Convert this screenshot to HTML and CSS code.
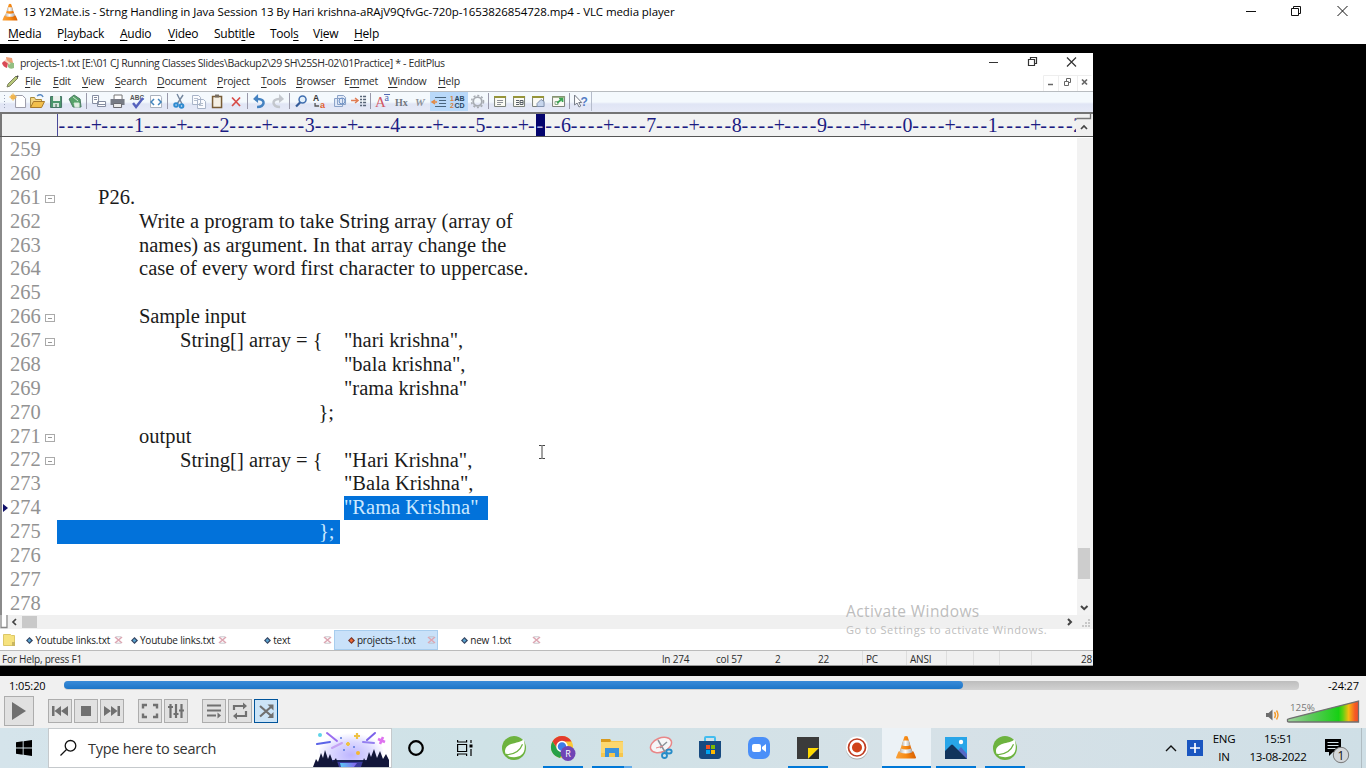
FILE: index.html
```html
<!DOCTYPE html>
<html lang="en">
<head>
<meta charset="utf-8">
<title>VLC media player</title>
<link rel="stylesheet" href="styles.css">
</head>
<body>
<svg class="defs" width="0" height="0">
  <defs>
    <linearGradient id="og" x1="0" x2="1"><stop offset="0" stop-color="#f9a13a"/><stop offset=".5" stop-color="#f78b14"/><stop offset="1" stop-color="#d95f00"/></linearGradient>
    <linearGradient id="wg" x1="0" x2="1"><stop offset="0" stop-color="#b9b9b9"/><stop offset=".45" stop-color="#fff"/><stop offset="1" stop-color="#a9a9a9"/></linearGradient>
    <symbol id="cone" viewBox="0 0 24 24">
      <path d="M4.5 16.5h15l2.500 6q0 .9-.9.9H2.900q-.9 0-.9-.9z" fill="url(#og)"/>
      <path d="M10.400 1.500q1.600-.8 3.200 0L18.800 18q-1 2-6.800 2t-6.800-2z" fill="url(#og)"/>
      <path d="M9.200 5.600h5.600l1.400 4.600q-4.200 1.800-8.400 0z" fill="url(#wg)"/>
      <path d="M6.800 13.400q5 2 10.400 0l1.200 3.800q-6.400 2.400-12.800 0z" fill="url(#wg)"/>
    </symbol>
    <symbol id="leaf" viewBox="0 0 24 24">
      <circle cx="12" cy="12" r="12" fill="#6db33f"/>
      <path d="M21.400 3.200C18.500 8 4 5.600 3 14.600c-.2 2.400 1 4.500 2.600 5.500 8 2.600 18.600 1 17-11.500-.2-2.200-.6-3.900-1.200-5.400z" fill="#fff"/>
      <path d="M4.600 18.800C12 18.300 18 14.800 20.500 8.200" fill="none" stroke="#6db33f" stroke-width="1.200"/>
      <circle cx="4.500" cy="19" r="1.200" fill="#6db33f"/>
    </symbol>
    <symbol id="tabx" viewBox="0 0 9 8"><path d="M1 1l7 6M8 1L1 7" stroke="#dda6b2" stroke-width="1.600"/><path d="M2 .8h5M2 7.200h5" stroke="#b9b9c0" stroke-width=".8"/></symbol>
    <symbol id="dia" viewBox="0 0 7 7"><path d="M3.500 0L7 3.500 3.500 7 0 3.500z" fill="#32415f"/><path d="M3.300 1.400l2 2-2 2-1.700-2z" fill="#5aa3cf"/></symbol>
    <symbol id="diar" viewBox="0 0 7 7"><path d="M3.500 0L7 3.500 3.500 7 0 3.500z" fill="#7a3225"/><path d="M3.300 1.400l2 2-2 2-1.700-2z" fill="#ee6b35"/></symbol>
  </defs>
</svg>

<header class="titlebar">
  <svg class="logo" width="16" height="18" viewBox="0 0 16 18" preserveAspectRatio="none"><use href="#cone" x="-1" y="0" width="18" height="18"/></svg>
  <span class="title">13 Y2Mate.is - Strng Handling in Java Session 13 By Hari krishna-aRAjV9QfvGc-720p-1653826854728.mp4 - VLC media player</span>
  <svg class="winbtns" width="116" height="24" fill="none" stroke="#111"><path d="M9 11.500h10M54.500 8.500h7v7h-7zM56.500 8V6.500h7v7H62M100.500 6l10 10M110.500 6l-10 10"/></svg>
</header>
<nav class="menu"><span><u>M</u>edia</span><span>P<u>l</u>ayback</span><span><u>A</u>udio</span><span><u>V</u>ideo</span><span>Subti<u>t</u>le</span><span>Tool<u>s</u></span><span>V<u>i</u>ew</span><span><u>H</u>elp</span></nav>

<main class="video">
  <section class="ep">
    <div class="ep-title">
      <svg class="ep-logo" width="14" height="14" viewBox="0 0 14 14"><path d="M4 1l6 1 1 5-6 1z" fill="#ee9f76"/><path d="M0 7q3-4 6 0l-1 5q-4-1-5-5z" fill="#d94a55"/><path d="M6 6l6 1v5q-4 2-6-1z" fill="#93bf83"/><path d="M3 4l5 4" stroke="#f6d4bd" stroke-width="2"/></svg>
      <span>projects-1.txt [E:\01 CJ Running Classes Slides\Backup2\29 SH\25SH-02\01Practice] * - EditPlus</span>
      <svg class="ep-btns" width="104" height="19" fill="none" stroke="#333"><path d="M0 9.500h9M39.500 6.500h6v6h-6zM41.500 6V4.500h6v6H46" stroke-width="1.200"/><path d="M78 4.500l9 9M87 4.500l-9 9" stroke-width="1.200"/></svg>
    </div>
    <div class="ep-menu">
      <svg width="16" height="16" viewBox="0 0 16 16"><path d="M3 11L11 3l2 2-8 8-3 1z" fill="#b7c77a" stroke="#7f8360"/><path d="M12 3l1 1" stroke="#444" stroke-width="2"/></svg>
      <span><u>F</u>ile</span><span><u>E</u>dit</span><span><u>V</u>iew</span><span><u>S</u>earch</span><span><u>D</u>ocument</span><span><u>P</u>roject</span><span><u>T</u>ools</span><span><u>B</u>rowser</span><span>E<u>m</u>met</span><span><u>W</u>indow</span><span><u>H</u>elp</span>
      <svg class="mdi" width="50" height="18" fill="none" stroke="#666"><path d="M.5 18V2.500h48M15.500 2.500V18M34.500 2.500V18" stroke="#eee"/><path d="M5 11.500h5" stroke-width="1.500"/><path d="M21.500 8.500h4v4h-4zM23.500 8V5.500h4v4H26"/><path d="M39 6.500l5 5M44 6.500l-5 5" stroke-width="1.700"/></svg>
    </div>
    <div class="toolbar">
      <svg class="grip" viewBox="0 0 9 19"><path d="M4.500 3v14" stroke="#9aa3b8" stroke-dasharray="1 2"/></svg>
      <svg class="tb" viewBox="0 0 19 19"><path d="M6.500 3.500h7l3 3v9h-10z" fill="#fff" stroke="#9b9ba8"/><path d="M4 1.500v7M.5 5h7M2 3l4 4M6 3L2 7" stroke="#f0b44c" stroke-width="1.300"/></svg>
      <svg class="tb" viewBox="0 0 19 19"><path d="M2.500 15.500v-10h4l1 2h6v3" fill="#f5d782" stroke="#a88b3d"/><path d="M2.500 15.500l3-6h11l-3 6z" fill="#f2bf4c" stroke="#a8792c"/><path d="M9 4q4-3 6 1" stroke="#598ac3" fill="none" stroke-width="1.500"/></svg>
      <svg class="tb" viewBox="0 0 19 19"><path d="M3.500 4.500h11v11h-11z" fill="#4b956d" stroke="#477466"/><path d="M6 4h7v5H6z" fill="#edf1ee"/><path d="M6 11h6v4H6z" fill="#d5e3dc"/><path d="M9 12v3" stroke="#354"/></svg>
      <svg class="tb" viewBox="0 0 19 19"><path d="M3 7l5-4 6 4 1 8H7z" fill="#56a36a" stroke="#4b7c63"/><path d="M7 5l5 4M8 11h5v4H9z" stroke="#d3e9d7" fill="#e4eee6"/></svg>
      <i class="sep"></i>
      <svg class="tb" viewBox="0 0 19 19"><path d="M3.500 3.500h6v8h-6zM8.500 9.500h8v5h-8z" fill="#fff" stroke="#848ca0"/><path d="M5 5.500h3M5 7.500h3M9 12.500h7" stroke="#848ca0"/></svg>
      <svg class="tb" viewBox="0 0 19 19"><path d="M6 7V3h8v4" fill="#fff" stroke="#777"/><path d="M2.500 7h14v6h-14z" fill="#777b85"/><path d="M5.500 11.500h8v4h-8z" fill="#ececec" stroke="#6a6a70"/></svg>
      <svg class="tb" viewBox="0 0 19 19"><text x="2" y="7.500" font-size="6.500" font-weight="700" fill="#555" font-family="Liberation Sans">ABC</text><path d="M5 11l3 4 7-9" fill="none" stroke="#5561bd" stroke-width="2.400"/></svg>
      <svg class="tb" viewBox="0 0 19 19"><path d="M3.500 3.500h10l1 2v10h-11z" fill="#fff" stroke="#a9b1bd"/><path d="M7 7l-3 3 3 3M11 7l3 3-3 3" stroke="#4385bd" fill="none" stroke-width="1.500"/></svg>
      <i class="sep"></i>
      <svg class="tb" viewBox="0 0 19 19"><path d="M7 2l5 10M13 3L7 12" stroke="#74879e" stroke-width="1.400"/><g fill="none" stroke="#2e8bd0" stroke-width="2"><circle cx="6" cy="13" r="1.800"/><circle cx="11.500" cy="14" r="1.800"/></g></svg>
      <svg class="tb" viewBox="0 0 19 19"><path d="M3.500 3.500h6l2 2v7h-8zM8.500 7.500h6l2 2v7h-8z" fill="#fbfcff" stroke="#a7b3c7"/><path d="M5 6.500h4M5 8.500h3M10 11.500h4M10 13.500h4" stroke="#b5bfcd"/></svg>
      <svg class="tb" viewBox="0 0 19 19"><path d="M4.500 4.500h9v11h-9z" fill="#f5f0e4" stroke="#785c36" stroke-width="1.500"/><path d="M7 2.500h4v3H7z" fill="#776e62"/></svg>
      <svg class="tb" viewBox="0 0 19 19"><path d="M5 5.500l8 8.500M13 5.500L5 14" stroke="#d74c48" stroke-width="1.700"/></svg>
      <i class="sep"></i>
      <svg class="tb" viewBox="0 0 19 19"><path d="M7 15c8 0 9-8 1-8H5" fill="none" stroke="#4482c1" stroke-width="2.500"/><path d="M8 2L3 7l5 4z" fill="#4482c1"/></svg>
      <svg class="tb" viewBox="0 0 19 19"><path d="M11 15c-8 0-9-8-1-8h3" fill="none" stroke="#c3c7cd" stroke-width="2.500"/><path d="M10 2l5 5-5 4z" fill="#c3c7cd"/></svg>
      <i class="sep"></i>
      <svg class="tb" viewBox="0 0 19 19"><circle cx="10.500" cy="7.500" r="3.500" fill="#e3f0fb" stroke="#3f6eb0" stroke-width="1.500"/><path d="M8 10.500L4 14.500" stroke="#345b98" stroke-width="2.300"/></svg>
      <svg class="tb" viewBox="0 0 19 19"><text x="2" y="9" font-size="8.500" font-weight="700" fill="#333" font-family="Liberation Sans">A</text><text x="9" y="15.500" font-size="9" font-weight="700" fill="#e2602f" font-family="Liberation Sans">a</text><path d="M4 11v3h4" stroke="#555" fill="none" stroke-width="1.300"/></svg>
      <svg class="tb" viewBox="0 0 19 19"><path d="M3.500 6.500h8v8h-8zM6.500 3.500h6l2 2v7h-8z" fill="#e3ebf8" stroke="#89a1c7"/><circle cx="11" cy="9" r="3" fill="none" stroke="#6d92c6"/></svg>
      <svg class="tb" viewBox="0 0 19 19"><path d="M1 8.500h6M5 6l3 2.500L5 11" stroke="#e07c54" fill="none" stroke-width="1.500"/><path d="M10 4.500h6M10 7.500h6M10 10.500h6M10 13.500h6" stroke="#586577" stroke-width="1.400" stroke-dasharray="2 1 4"/></svg>
      <i class="sep"></i>
      <svg class="tb" viewBox="0 0 19 19"><text x="2" y="15" font-size="15" fill="#d25765" font-family="Liberation Serif">A</text><text x="11.500" y="9" font-size="10" fill="#5369b2" font-family="Liberation Serif">a</text><path d="M11 2.500h6" stroke="#5369b2"/></svg>
      <svg class="tb" viewBox="0 0 19 19"><text x="3" y="13.500" font-size="10" font-weight="700" fill="#72777e" font-family="Liberation Serif">Hx</text></svg>
      <svg class="tb" viewBox="0 0 19 19"><text x="4" y="13.500" font-size="11" font-style="italic" font-weight="700" fill="#8e939b" font-family="Liberation Serif">W</text></svg>
      <svg class="tb on" viewBox="0 0 19 19"><path d="M5 5.500h11M9 8.500h7M9 11.500h7M5 14.500h11" stroke="#48657d" stroke-width="1.200"/><path d="M2 10h5M5 8l-3 2 3 2" stroke="#e28a44" fill="none" stroke-width="1.500"/></svg>
      <svg class="tb on" viewBox="0 0 19 19"><g font-size="7" font-weight="700" font-family="Liberation Sans"><text x="1" y="9" fill="#d7823d">1</text><text x="5.500" y="9" fill="#294762">AB</text><text x="1" y="16" fill="#d7823d">2</text><text x="5.500" y="16" fill="#294762">CD</text></g></svg>
      <svg class="tb" viewBox="0 0 19 19"><circle cx="9.500" cy="9.500" r="4.300" fill="none" stroke="#a7abb1" stroke-width="1.800"/><circle cx="9.500" cy="9.500" r="6" fill="none" stroke="#a7abb1" stroke-width="1.500" stroke-dasharray="2 1.900"/></svg>
      <i class="sep"></i>
      <svg class="tb" viewBox="0 0 19 19"><path d="M3.500 4.500h11v10h-11z" fill="#fbfbf4" stroke="#7a8078"/><path d="M3 5h12" stroke="#96953a" stroke-width="2"/><path d="M6 8.500h6M6 10.500h6M6 12.500h4" stroke="#8c9097"/></svg>
      <svg class="tb" viewBox="0 0 19 19"><path d="M3.500 4.500h11v10h-11z" fill="#fbfbf4" stroke="#7a8078"/><path d="M3 5h12" stroke="#96953a" stroke-width="2"/><path d="M6 8.500h3M6 10.500h3M6 12.500h3M10 8.500h3v4h-3zM10 10.500h3" stroke="#555d66" fill="none"/></svg>
      <svg class="tb" viewBox="0 0 19 19"><path d="M3.500 4.500h11v10h-11z" fill="#fbfbf4" stroke="#7a8078"/><path d="M3 5h12" stroke="#96953a" stroke-width="2"/><path d="M8 11.500l4-4 3 2v5H8z" fill="#c7d6ed" stroke="#8192ae"/></svg>
      <svg class="tb" viewBox="0 0 19 19"><path d="M3.500 4.500h12v10h-12z" fill="#fbfbf4" stroke="#7a8078"/><path d="M3 5h13" stroke="#8b9b72" stroke-width="1.500"/><path d="M6 9.500h3v3H6z" fill="none" stroke="#8ba98b"/><path d="M8 11l5-4M10 6.500h3.500V10" stroke="#3aa653" fill="none" stroke-width="1.700"/></svg>
      <i class="sep"></i>
      <svg class="tb" viewBox="0 0 19 19"><path d="M2.500 3v10l2.500-2 2 4 1.700-1-2-3.500h3z" fill="#fff" stroke="#757b87"/><text x="8.500" y="13.500" font-size="12" font-weight="700" fill="#557ec6" font-family="Liberation Sans">?</text></svg>
      <i class="tb-end"></i>
    </div>
    <div class="ruler">
      <div class="margin"></div>
      <div class="ticks"><b>----</b><i>+</i><b>----</b><i>1</i><b>----</b><i>+</i><b>----</b><i>2</i><b>----</b><i>+</i><b>----</b><i>3</i><b>----</b><i>+</i><b>----</b><i>4</i><b>----</b><i>+</i><b>----</b><i>5</i><b>----</b><i>+</i><b class="one">-</b><b class="one cur">-</b><b class="two">--</b><i>6</i><b>----</b><i>+</i><b>----</b><i>7</i><b>----</b><i>+</i><b>----</b><i>8</i><b>----</b><i>+</i><b>----</b><i>9</i><b>----</b><i>+</i><b>----</b><i>0</i><b>----</b><i>+</i><b>----</b><i>1</i><b>----</b><i>+</i><b>----</b><i>2</i></div>
      <svg class="split" width="17" height="25" viewBox="0 0 17 25" fill="none"><path d="M0 0h17v25H0z" fill="#f0f0f0"/><path d="M0 7.500l1-1h13.500V1H0" stroke="#777" stroke-width="1.300"/><path d="M5 17l3-3 3 3" stroke="#444" stroke-width="1.700"/></svg>
    </div>
    <div class="edit">
<div class="nums"><span>259</span><span>260</span><span class="f">261</span><span>262</span><span>263</span><span>264</span><span>265</span><span class="f">266</span><span class="f">267</span><span>268</span><span>269</span><span>270</span><span class="f">271</span><span class="f">272</span><span>273</span><span class="here">274</span><span>275</span><span>276</span><span>277</span><span>278</span></div>
<pre class="code">


	P26.
		Write a program to take String array (array of
		names) as argument. In that array change the
		<span class="wide">case of every word first character to uppercase.</span>

		<span class="tight">Sample input</span>
			String[] array = {	"hari krishna",
							"bala krishna",
							"rama krishna"
						   };
		output
			String[] array = {	"Hari Krishna",
							"Bala Krishna",
							<span class="sel a">"Rama Krishna"</span>
<span class="sel b">};</span>
</pre>
      <svg class="ibeam" width="8" height="14" fill="none" stroke="#444"><path d="M1 .5h2.500l.5.500.5-.5H7M4 1v12M1 13.500h2.500l.5-.5.5.500H7"/></svg>
      <div class="vscroll"><i></i><svg width="16" height="14" viewBox="0 0 16 14"><path d="M4 5l3.200 3.200L10.500 5" fill="none" stroke="#444" stroke-width="2"/></svg></div>
    </div>
    <div class="hscroll">
      <svg width="22" height="14" viewBox="0 0 22 14" fill="none"><path d="M0 0h8v13H0z" fill="#fff"/><path d="M1 0v12.500h6V0" stroke="#888" stroke-width="1.300"/><path d="M16 4l-3 3 3 3" stroke="#444" stroke-width="1.700"/></svg><i></i>
      <svg class="hr" width="28" height="14" viewBox="0 0 28 14" fill="none"><path d="M3 4l3 3-3 3" stroke="#444" stroke-width="2"/><path d="M17 11h2M20 11h2M23 11h2M20 8h2M23 8h2M23 5h2" stroke="#bbb" stroke-width="1.500"/></svg>
    </div>
    <div class="tabs">
      <svg class="fold" width="20" height="20" viewBox="0 0 20 20"><path d="M3.500 4.500h7l1 1h3v10h-11z" fill="#f6e27e" stroke="#dcc767"/><path d="M12 12h3v4h-3z" fill="#c9b661"/></svg>
      <div class="tab"><span><svg width="7" height="7"><use href="#dia"/></svg>Youtube links.txt</span><svg width="9" height="8"><use href="#tabx"/></svg></div>
      <div class="tab"><span><svg width="7" height="7"><use href="#dia"/></svg>Youtube links.txt</span><svg width="9" height="8"><use href="#tabx"/></svg></div>
      <div class="tab"><span><svg width="7" height="7"><use href="#dia"/></svg>text</span><svg width="9" height="8"><use href="#tabx"/></svg></div>
      <div class="tab act"><span><svg width="7" height="7"><use href="#diar"/></svg>projects-1.txt</span><svg width="9" height="8"><use href="#tabx"/></svg></div>
      <div class="tab"><span><svg width="7" height="7"><use href="#dia"/></svg>new 1.txt</span><svg width="9" height="8"><use href="#tabx"/></svg></div>
    </div>
    <div class="status"><span>For Help, press F1</span><span>ln 274</span><span>col 57</span><span>2</span><span>22</span><span class="l">PC</span><span class="l">ANSI</span><span class="l"></span><span class="l"></span><span class="l"></span><span class="l last">28</span></div>
    <div class="wm"><p class="wm1">Activate Windows</p><p class="wm2">Go to Settings to activate Windows.</p></div>
  </section>
</main>

<section class="controls">
  <div class="seek"><span class="t1">1:05:20</span><div class="bar"><i></i></div><span class="t2">-24:27</span></div>
  <div class="btns">
    <button class="play"><svg width="28" height="28"><path d="M7 5l14 9-14 9z"/></svg></button>
    <div class="g"><button><svg width="22" height="22"><path d="M3 6h2.500v10H3zM12 6v10l-6.500-5zM19 6v10l-7-5z"/></svg></button><button><svg width="22" height="22"><path d="M6 6h10v10H6z"/></svg></button><button><svg width="22" height="22"><path d="M16.500 6H19v10h-2.500zM10 6v10l6.500-5zM3 6v10l7-5z"/></svg></button></div>
    <div class="g"><button><svg width="22" height="22"><path d="M4 8.500V5h4M14 5h4v3.500M4 13.500V17h4M14 17h4v-3.500" fill="none" stroke="#707070" stroke-width="2.400"/></svg></button><button><svg width="22" height="22"><path d="M5.500 4v14M11 4v14M16.500 4v14M3 7h5M8.500 14h5M14 10.500h5" fill="none" stroke="#707070" stroke-width="2.200"/></svg></button></div>
    <div class="g"><button><svg width="22" height="22"><path d="M4 5.500h14M4 10.500h14M4 15.500h9" stroke="#707070" stroke-width="2.200"/><path d="M14.500 12.500L18 15.500l-3.500 3z"/></svg></button><button><svg width="22" height="22"><path d="M5 10V6h10M17 11v5H7" fill="none" stroke="#707070" stroke-width="2.200"/><path d="M14 2.500L18 6l-4 3.500zM8 12.500L4 16l4 3.500z"/></svg></button><button class="on"><svg width="22" height="22"><path d="M5 6l12 10.500M5 16.500L17 6" fill="none" stroke="#707070" stroke-width="2.200"/><path d="M12.500 4.500h6v6zM12.500 18h6v-6z"/></svg></button></div>
    <svg class="vol" width="96" height="28" viewBox="0 0 96 28">
      <defs><linearGradient id="vg" x1="0" x2="1"><stop offset="0" stop-color="#a3d3a1"/><stop offset=".3" stop-color="#63c862"/><stop offset=".72" stop-color="#17d014"/><stop offset=".78" stop-color="#5fd012"/><stop offset=".86" stop-color="#f6bb12"/><stop offset=".95" stop-color="#f55b24"/><stop offset="1" stop-color="#f34a28"/></linearGradient></defs>
      <path d="M2 19v-4h2.500l4-3.500v11l-4-3.500z" fill="#6d6d6d"/><path d="M10.500 14q2 3 0 6M12.500 12.500q3 4.500 0 9" fill="none" stroke="#f39b2c" stroke-width="1.400"/>
      <path d="M23.500 23.500v-2q0 0 2-1L94.500 3v21H25q-1.500 0-1.500-.5z" fill="url(#vg)" stroke="#707070" stroke-width="1.300"/>
      <text x="26" y="12.500" font-size="9.500" fill="#777" font-family="Open Sans" textLength="25" lengthAdjust="spacingAndGlyphs">125%</text>
    </svg>
  </div>
</section>

<footer class="taskbar">
  <div class="start"><svg width="16" height="16"><path d="M0 2.300l6.700-1v6.300H0zM7.600 1.200L16 0v7.600H7.600zM0 8.500h6.700v6.300L0 13.800zM7.600 8.500H16V16l-8.400-1.200z"/></svg></div>
  <div class="search">
    <svg class="mag" width="18" height="18" fill="none" stroke="#111" stroke-width="1.300"><circle cx="10.500" cy="6.800" r="5.300"/><path d="M6.500 10.500L.5 16.500"/></svg>
    <span>Type here to search</span>
    <svg class="art" width="78" height="38" viewBox="0 0 78 38">
      <defs><radialGradient id="rg" cx=".5" cy=".6" r=".55"><stop offset="0" stop-color="#bdb5ff"/><stop offset=".6" stop-color="#dcd9ff"/><stop offset="1" stop-color="#fff"/></radialGradient><linearGradient id="lk" x1="0" x2="1"><stop offset="0" stop-color="#59c8f5"/><stop offset="1" stop-color="#8561ea"/></linearGradient></defs>
      <ellipse cx="38" cy="22" rx="32" ry="20" fill="url(#rg)"/>
      <g stroke-linecap="round" stroke-width="2"><path d="M14 4l10 8" stroke="#9a6df0"/><path d="M4 15l13-2" stroke="#5a63e8"/><path d="M62 4l-8 7" stroke="#7b62ea"/><path d="M61 14l-11-1" stroke="#9480f0"/><path d="M19 19l10-5" stroke="#c5a3f4"/></g>
      <path d="M44 4v6M41 7h6M35 13v4M33 15h4" stroke="#efc244" stroke-width="2.200"/><path d="M65 10l7 3M70 8l-3 7" stroke="#de73ef" stroke-width="2.600"/><circle cx="7" cy="6" r="2" fill="#5dd4e9"/><circle cx="45" cy="24" r="2" fill="#f4b631"/><circle cx="28" cy="9" r="1" fill="#5877dd"/><circle cx="31" cy="21" r="1" fill="#5877dd"/><circle cx="41" cy="18" r="1" fill="#5877dd"/>
      <path d="M18 31h40v7H18z" fill="#3b3b9d"/><path d="M27 34h17l-3 4H28z" fill="url(#lk)"/><path d="M20 31h34v2H20z" fill="#1b2458"/>
      <path d="M0 38l3-8 2 3 3-9 2 5 2-8 3 9 2-5 3 8 3-4 3 9zM48 38l3-9 2 4 3-10 2 5 3-8 3 9 3-7 3 8 3-5 3 6v7z" fill="#12163a"/>
    </svg>
  </div>
  <div class="apps">
    <div class="app"><svg width="18" height="18"><circle cx="9" cy="9" r="6.800" fill="none" stroke="#000" stroke-width="2.200"/></svg></div>
    <div class="app"><svg width="18" height="18" fill="none" stroke="#000" stroke-width="1.200"><path d="M1.600 5.500h9v7h-9zM1.600 1v2h9V1M1.600 17v-2h9v2M15 1v3M15 10v7"/><path d="M13.500 5.500h3v3h-3z" fill="#000" stroke="none"/></svg></div>
    <div class="app"><svg width="24" height="24"><use href="#leaf"/></svg></div>
    <div class="app run"><svg width="26" height="26" viewBox="0 0 26 26"><circle cx="12" cy="12" r="11" fill="#fcc934"/><path d="M12 1a11 11 0 0 1 9.500 5.500H12l-4 8L2.500 6.500A11 11 0 0 1 12 1z" fill="#e33b2e"/><path d="M2.500 6.500L8 15l5 2-3 6A11 11 0 0 1 2.500 6.500z" fill="#27a148"/><circle cx="12" cy="11.500" r="5" fill="#3d7de8" stroke="#fff" stroke-width="1.500"/><circle cx="18" cy="18.500" r="7.500" fill="#7045b5"/><text x="18" y="22" text-anchor="middle" font-size="9" fill="#fff" font-family="Open Sans">R</text></svg></div>
    <div class="app run more"><svg width="22" height="20" viewBox="0 0 22 20"><path d="M0 1h9l1.500 2H22v16H0z" fill="#f6c64d"/><path d="M0 1h9l1 2-1 1H0z" fill="#d99a1c"/><path d="M0 4h22v11H0z" fill="#fbd76f"/><path d="M4 10h14v9h-4v-4H8v4H4z" fill="#3b92dc"/></svg></div>
    <div class="app"><svg width="24" height="24" viewBox="0 0 24 24" fill="none"><ellipse cx="12" cy="9" rx="11" ry="7" transform="rotate(-22 12 9)" fill="#f5f6f7" stroke="#e98788" stroke-width="1.500"/><path d="M9 4l7 12M18 6l-7 6" stroke="#8b9198" stroke-width="1.500"/><path d="M7 12l7-2" stroke="#e88"/><g stroke="#278cc8" stroke-width="1.800"><circle cx="15.500" cy="19.500" r="2.500"/><ellipse cx="20" cy="15.500" rx="2.700" ry="2"/></g></svg></div>
    <div class="app"><svg width="24" height="24" viewBox="0 0 24 24"><path d="M7 6V2q0-1 1-1h8q1 0 1 1v4" fill="none" stroke="#43bdef" stroke-width="2"/><path d="M1 5h22v15q0 3-3 3H4q-3 0-3-3z" fill="#174a80"/><path d="M8 9h4v4H8z" fill="#f25022"/><path d="M13 9h4v4h-4z" fill="#7fba00"/><path d="M8 14h4v4H8z" fill="#00a4ef"/><path d="M13 14h4v4h-4z" fill="#ffb900"/></svg></div>
    <div class="app"><svg width="24" height="24"><rect x="1" y="1" width="22" height="22" rx="7" fill="#4a8ff8"/><rect x="5" y="8" width="9" height="8" rx="2" fill="#fff"/><path d="M15 11l4-3v8l-4-3z" fill="#fff"/></svg></div>
    <div class="app run"><svg width="22" height="22"><path d="M0 0h22v11L11 22H0z" fill="#3b3b3b"/><path d="M11 11h11L11 22z" fill="#ffd900"/><path d="M22 11v11H11z" fill="#292929"/></svg></div>
    <div class="app"><svg width="24" height="24"><circle cx="12" cy="12.500" r="11" fill="#aaa"/><circle cx="12" cy="11.500" r="11" fill="#fff"/><circle cx="12" cy="11.500" r="8.500" fill="none" stroke="#bf3c21" stroke-width="1.700"/><circle cx="12" cy="11.500" r="5" fill="#d04218"/></svg></div>
    <div class="app cur"><svg width="24" height="24"><use href="#cone"/></svg></div>
    <div class="app run"><svg width="22" height="22"><path d="M0 0h22v22H0z" fill="#28a5e8"/><path d="M10 17l6-7 6 7v5H10z" fill="#5469c6"/><path d="M0 14l6-6q1-1 2 0l14 14H0z" fill="#12345c"/><circle cx="16" cy="5" r="2.200" fill="#fff"/></svg></div>
    <div class="app run"><svg width="24" height="24"><use href="#leaf"/></svg></div>
  </div>
  <div class="tray">
    <svg width="12" height="8" fill="none" stroke="#111" stroke-width="1.400"><path d="M1 7l5-5 5 5"/></svg>
    <svg class="plus" width="16" height="16"><path d="M0 0h16v16H0z" fill="#1a56c0"/><path d="M8 3v10M3 8h10" stroke="#fff" stroke-width="1.700"/></svg>
    <div class="lang">ENG<br>IN</div>
    <div class="clock"><span>15:51</span><span class="date">13-08-2022</span></div>
    <svg class="note" width="26" height="26" viewBox="0 0 26 26"><path d="M1 1h16v13H9l-4 4v-4H1z"/><path d="M3.500 4.500h11M3.500 7.500h11M3.500 10.500h8" stroke="#d5e3e9"/><circle cx="17" cy="17" r="7.700" fill="#d3d7da" stroke="#777"/><text x="17" y="21.500" text-anchor="middle" font-size="12" fill="#111" font-family="Open Sans">1</text></svg>
  </div>
</footer>
</body>
</html>
```

FILE: styles.css
```css
* { box-sizing: border-box; }
body { margin: 0; width: 1366px; height: 768px; overflow: hidden; display: flex; flex-direction: column; background: #fff; font: 12px/16px "Open Sans", "Noto Sans", sans-serif; color: #000; }
svg { display: block; flex: none; }
.defs { position: absolute; }
u { text-underline-offset: 2px; text-decoration-thickness: 1px; }
i, b { font-style: normal; font-weight: 400; }

.titlebar { height: 24px; display: flex; align-items: center; padding: 0 13px 0 2px; flex: none; }
.title { margin-left: 5px; white-space: nowrap; font-size: 11.5px; letter-spacing: -0.08px; }
.winbtns { margin-left: auto; }
.menu { height: 20px; flex: none; display: grid; grid-template-columns: 49px 63px 48px 46px 56px 43px 41px 50px; padding: 2px 0 0 8px; letter-spacing: -0.25px; }

.video { height: 632px; flex: none; background: #000; padding-top: 9px; }
.ep { width: 1093px; height: 613px; background: #fff; position: relative; display: flex; flex-direction: column; overflow: hidden; color: #2c2c2c; font-size: 10.5px; }
.ep > div { flex: none; }
.ep-title { height: 19px; display: flex; align-items: center; padding: 0 0 0 2px; letter-spacing: -0.35px; white-space: nowrap; }
.ep-title span { margin-left: 4px; }
.ep-btns { margin-left: auto; }
.ep-menu { height: 19px; display: grid; grid-template-columns: 20px 28px 29px 33px 42px 60px 44px 35px 48px 44px 50px 1fr 50px; padding: 1px 0 0 5px; letter-spacing: -0.2px; }
.toolbar { height: 21px; display: flex; align-items: center; background: linear-gradient(#f4f9fd 0 50%, #e0e5f5 60%, #e6eaf7); border-top: 1px solid #b8bcc0; padding-bottom: 2px; }
.grip { width: 9px; height: 19px; }
.tb { width: 19.1px; height: 19px; }
.tb.on { background: #b9d9fa; }
.sep { width: 4px; height: 16px; background: linear-gradient(90deg, transparent 1px, #99a 1px 2px, transparent 2px); }
.tb-end { width: 1px; height: 19px; background: #b5bccb; }

.ruler { height: 25px; display: flex; border-top: 2px solid #747474; border-bottom: 1px solid #555; background: #f1f2f2; overflow: hidden; color: #1c1c82; font: 20px/23px "Liberation Serif", serif; }
.margin { width: 58px; flex: none; border-left: 2px solid #777; border-right: 1px solid #4a4a9a; }
.ticks { width: 1018px; flex: none; display: flex; overflow: hidden; }
.ticks b { width: 34.16px; flex: none; letter-spacing: 1.88px; padding-left: .5px; white-space: nowrap; }
.ticks i { width: 8.54px; flex: none; display: flex; justify-content: center; }
.ticks .one { width: 8.54px; }
.ticks .two { width: 17.08px; }
.ticks .cur { background: #04046e; color: #aeb0dc; }
.split { margin-top: -2px; }

.edit { height: 478px; padding-top: 1px; display: flex; position: relative; border-left: 2px solid #8a8a8a; overflow: hidden; font: 20.5px/23.89px "Liberation Serif", serif; }
.nums { width: 55px; flex: none; display: flex; flex-direction: column; padding: 0 0 0 8px; color: #929292; }
.nums span { height: 23.89px; position: relative; }
.nums .f::after { content: ""; position: absolute; left: 35px; top: 9px; width: 8px; height: 6px; border: 1px solid #aaa; background: linear-gradient(#999, #999) center / 4px 1px no-repeat; }
.nums .here::before { content: ""; position: absolute; left: -7px; top: 8px; border: 4px solid transparent; border-left: 5px solid #10106a; border-right: 0; }
.code { margin: 0; flex: 1; font: inherit; tab-size: 41px; color: #1b1b1b; }
.wide { letter-spacing: .05px; }
.tight { letter-spacing: -.15px; }
.sel { display: inline-block; height: 23.89px; vertical-align: top; background: #0272da; color: #cbe9ff; }
.sel.a { width: 144px; }
.sel.b { width: 283px; padding-left: 262px; }
.ibeam { position: absolute; left: 536px; top: 308px; }
.vscroll { width: 16px; flex: none; background: #f2f2f2; display: flex; flex-direction: column; justify-content: flex-end; }
.vscroll i { width: 12px; height: 31px; margin: 0 0 22px 1px; background: #cdcdcd; }
.hscroll { height: 14px; display: flex; background: #f0f0f0; }
.hscroll i { width: 15px; height: 12px; margin-top: 1px; background: #c9c9c9; }
.hr { margin-left: auto; }
.tabs { height: 22px; display: flex; border-bottom: 1px solid #bbb; padding-top: 1px; color: #222; font-size: 10px; }
.tab { width: 104.5px; height: 20px; display: flex; align-items: center; padding-right: 1px; border: 1px solid transparent; }
.tab span { flex: 1; display: flex; align-items: center; justify-content: center; gap: 2px; white-space: nowrap; letter-spacing: -0.2px; padding-left: 2px; }
.tab.act { background: #c9e1f9; border-color: #a8cdee; }
.status { height: 15px; background: #f0f0f0; border-bottom: 1px solid #999; display: grid; grid-template-columns: 660px 54px 59px 43px 44px 44px 40px 27px 26px 32px 1fr; padding-left: 2px; font-size: 10px; line-height: 17px; letter-spacing: -0.2px; }
.status span { height: 14px; }
.status .l { border-left: 1px solid #ddd; padding-left: 3px; }
.status .last { text-align: right; padding-right: 1px; }
.wm { position: absolute; left: 846px; top: 548px; color: #bdbdbd; }
.wm p { margin: 0; white-space: nowrap; }
.wm1 { font-size: 15.5px; line-height: 20px; letter-spacing: .4px; }
.wm2 { font-size: 11px; line-height: 18px; letter-spacing: .6px; }

.controls { height: 52px; flex: none; background: #f0f0f0; padding-top: 3px; }
.seek { height: 14px; display: flex; align-items: center; font-size: 11px; padding: 0 7px 0 9px; }
.seek span { letter-spacing: -0.1px; }
.t1 { width: 55px; }
.bar { width: 1235px; height: 9px; margin-top: -1px; border-radius: 4px; background: linear-gradient(#bdbdbd, #d2d2d2); }
.bar i { display: block; width: 899px; height: 8px; border-radius: 4px; background: linear-gradient(#3a8bd8, #1d76c8); }
.t2 { margin-left: auto; }
.btns { height: 32px; display: flex; align-items: center; padding: 3px 6px 0 4px; }
button { width: 24px; height: 24px; padding: 0; border: 1px solid #adadad; background: #e1e1e1; }
button svg { fill: #707070; }
.play { width: 30px; height: 30px; }
.g { display: flex; gap: 2px; margin-left: 14px; }
button.on { background: #cce4f7; border-color: #00549b; }
.vol { margin-left: auto; margin-top: 3px; }

.taskbar { height: 40px; flex: none; display: flex; background: linear-gradient(90deg, #d5e4eb, #cfe2e7 35%, #d6e1e7 70%, #cfdfe6); }
.start { width: 48px; display: grid; place-items: center; }
.search { width: 344px; background: #fff; border: 1px solid #c5c9cc; display: flex; align-items: center; color: #333; font-size: 14.5px; }
.mag { margin-left: 11px; }
.search span { margin: 1px 0 0 10px; letter-spacing: -0.28px; }
.art { margin-left: auto; }
.apps { display: flex; margin-left: -1px; }
.app { width: 49.1px; height: 40px; display: grid; place-items: center; position: relative; }
.app.run::after { content: ""; position: absolute; bottom: 0; left: 4.5px; width: 40px; height: 2px; background: #0078d7; }
.app.more::after { background: linear-gradient(90deg, #0078d7 32px, #63acea 32px); }
.app.cur { background: #ecf2f6; border-bottom: 2px solid #0078d7; }
.tray { margin-left: auto; display: flex; align-items: center; width: 197px; height: 40px; border-right: 1px solid #b0bcc2; margin-right: 4px; white-space: nowrap; }
.plus { margin-left: 10px; }
.lang, .clock { text-align: center; line-height: 18px; font-size: 11.5px; letter-spacing: -0.3px; }
.lang { width: 24px; margin-left: 9px; }
.clock { width: 62px; margin-left: 11px; display: flex; flex-direction: column; }
.note { margin-left: 15px; margin-top: 6px; }
```
